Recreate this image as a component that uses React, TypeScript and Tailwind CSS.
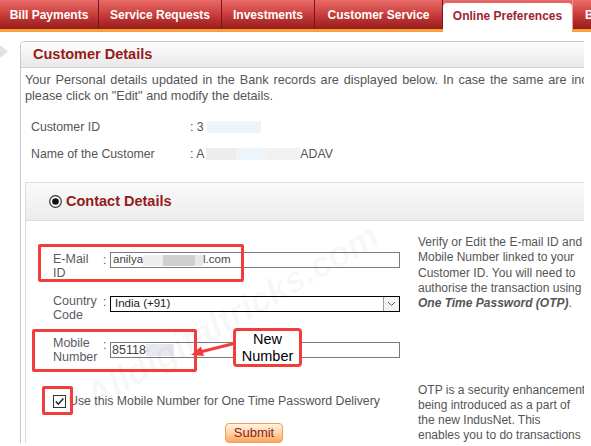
const tabs = [
  { label: "Bill Payments", w: "w-[99px]" },
  { label: "Service Requests", w: "w-[123px]" },
  { label: "Investments", w: "w-[93px]" },
  { label: "Customer Service", w: "w-[128px]" },
];

function TabBar() {
  return (
    <div className="flex h-[32px] border-b-[3px] border-[#f6a13a] bg-gradient-to-b from-[#ea6b69] via-[#c83d3b] to-[#971b1b]">
      {tabs.map((t) => (
        <div
          key={t.label}
          className={`${t.w} flex shrink-0 items-center justify-center border-r border-[#7e1414] text-[12px] font-bold text-white`}
        >
          {t.label}
        </div>
      ))}
      <div className="mt-[3px] flex h-[29px] w-[129px] shrink-0 items-start justify-center rounded-t-[4px] bg-white pt-[4px] text-[12px] font-bold text-[#9c2433]">
        Online Preferences
      </div>
      <div className="flex shrink-0 items-center border-l border-[#f29a9a] pl-[12px] text-[12px] font-bold text-white">
        Bill Pay
      </div>
    </div>
  );
}

function Radio() {
  return (
    <svg width="13" height="13" viewBox="0 0 13 13">
      <circle cx="6.5" cy="6.5" r="5.8" fill="#fff" stroke="#333" strokeWidth="1.2" />
      <circle cx="6.5" cy="6.5" r="3.3" fill="#111" />
    </svg>
  );
}

function CheckBox() {
  return (
    <svg width="13" height="13" viewBox="0 0 13 13">
      <rect x="0.5" y="0.5" width="12" height="12" fill="#fff" stroke="#333" />
      <path d="M2.8 6.6 L5.3 9.2 L10.4 3.4" fill="none" stroke="#222" strokeWidth="1.5" />
    </svg>
  );
}

function FormRow({
  label,
  colonTop,
  fieldTop,
  children,
}: {
  label: string;
  colonTop: string;
  fieldTop: string;
  children: React.ReactNode;
}) {
  return (
    <div className="flex items-start">
      <div className="w-[48px] text-[12.5px] leading-[14px] text-[#5a5a66]">{label}</div>
      <div className={`${colonTop} w-[9px] pl-[2px] text-[12px] leading-[14px]`}>:</div>
      <div className={fieldTop}>{children}</div>
    </div>
  );
}

export default function App() {
  return (
    <div className="relative h-[446px] w-[591px] overflow-hidden bg-white font-['Liberation_Sans',Arial,sans-serif] text-[#555]">
      <TabBar />
      <div className="mt-[9px] flex">
        <div className="w-[20px] shrink-0 pt-[4px]">
          <svg width="9" height="13" viewBox="0 0 9 13">
            <polygon points="0,0 8,6.5 0,13" fill="#e2e2e2" />
          </svg>
        </div>
        <div className="w-[564px] shrink-0 overflow-hidden rounded-tl-[5px] border-l border-t border-[#c9c9c9]">
          <div className="flex h-[26px] items-center border-b border-[#cfcfcf] bg-gradient-to-b from-[#fefefe] to-[#e8e8e8] pl-[12px] text-[14.5px] font-bold text-[#951b1b]">
            Customer Details
          </div>
          <div className="pl-[4px]">
            <div className="whitespace-nowrap pt-[4px] text-[12.7px] leading-[16px]">
              <div className="[word-spacing:1.3px]">
                Your Personal details updated in the Bank records are displayed below. In case the same are incorrect,
              </div>
              <div>please click on "Edit" and modify the details.</div>
            </div>

            <div className="mt-[15px] flex text-[12.3px] leading-[16px]">
              <div className="w-[165px] pl-[6px]">Customer ID</div>
              <div className="flex items-center">
                : 3<span className="ml-[3px] inline-block h-[12px] w-[54px] bg-[#eef5fa]" />
              </div>
            </div>
            <div className="mt-[11px] flex text-[12.3px] leading-[16px]">
              <div className="w-[165px] pl-[6px]">Name of the Customer</div>
              <div className="flex items-center whitespace-nowrap">
                : A
                <span className="ml-[2px] inline-block h-[12px] w-[30px] bg-[#ededed]" />
                <span className="inline-block h-[12px] w-[30px] bg-[#eef5fa]" />
                <span className="inline-block h-[12px] w-[34px] bg-[#f1f1f1]" />
                ADAV
              </div>
            </div>

            <div className="mt-[20px] w-[620px] border-l border-t border-[#dcdcdc]">
              <div className="flex h-[38px] items-center gap-[4px] border-b border-[#dcdcdc] bg-gradient-to-b from-[#fafafa] to-[#ececec] pl-[23px]">
                <Radio />
                <span className="text-[14.5px] font-bold text-[#951b1b]">Contact Details</span>
              </div>

              <div className="flex">
                <div className="w-[392px] shrink-0 pl-[27px] pt-[31px]">
                  <FormRow label="E-Mail ID" colonTop="mt-[1px]" fieldTop="mt-0">
                    <div className="flex h-[16px] w-[290px] items-center border border-[#7a7a7a] pl-[2px] text-[11.5px] text-[#444]">
                      anilya
                      <span className="inline-block h-[11px] w-[20px] bg-[#eeeeee]" />
                      <span className="inline-block h-[11px] w-[32px] bg-[#cfcfcf]" />
                      <span className="inline-block h-[11px] w-[8px] bg-[#e8e8e8]" />
                      l.com
                    </div>
                  </FormRow>
                  <div className="mt-[14px]">
                    <FormRow label="Country Code" colonTop="mt-[1px]" fieldTop="mt-[2px]">
                      <div className="flex h-[16px] w-[290px] items-center justify-between border border-black text-[11.5px] text-[#222]">
                        <span className="pl-[4px]">India (+91)</span>
                        <span className="flex h-[14px] w-[16px] items-center justify-center border-l border-[#9a9a9a] bg-[#f4f4f4]">
                          <svg width="9" height="6" viewBox="0 0 9 6">
                            <path d="M1 1 L4.5 4.5 L8 1" fill="none" stroke="#555" strokeWidth="1" />
                          </svg>
                        </span>
                      </div>
                    </FormRow>
                  </div>
                  <div className="mt-[14px]">
                    <FormRow label="Mobile Number" colonTop="mt-[2px]" fieldTop="mt-[6px]">
                      <div className="flex h-[16px] w-[290px] items-center border border-[#7a7a7a] pl-[1px] text-[12.5px] text-[#444]">
                        85118
                        <span className="inline-block h-[12px] w-[28px] bg-[#e8e8f0]" />
                      </div>
                    </FormRow>
                  </div>
                  <div className="mt-[29px] flex items-center gap-[3px] whitespace-nowrap text-[12.3px] leading-[16px]">
                    <CheckBox />
                    <span>Use this Mobile Number for One Time Password Delivery</span>
                  </div>
                  <div className="mt-[14px] pl-[172px]">
                    <div className="flex h-[20px] w-[58px] items-center justify-center rounded-[4px] border border-[#f0a050] bg-gradient-to-b from-[#fff3e6] via-[#ffd3a6] to-[#f9a85e] text-[13px] text-[#8b1c1c]">
                      Submit
                    </div>
                  </div>
                </div>

                <div className="whitespace-nowrap pt-[14px] text-[12px] leading-[15.3px]">
                  <div>Verify or Edit the E-mail ID and</div>
                  <div>Mobile Number linked to your</div>
                  <div>Customer ID. You will need to</div>
                  <div>authorise the transaction using</div>
                  <div>
                    <b>
                      <i>One Time Password (OTP)</i>
                    </b>
                    .
                  </div>
                  <div className="mt-[72px] leading-[14.8px]">
                    <div>OTP is a security enhancement</div>
                    <div>being introduced as a part of</div>
                    <div>the new IndusNet. This</div>
                    <div>enables you to do transactions</div>
                  </div>
                </div>
              </div>
            </div>
          </div>
        </div>
      </div>

      {/* watermark */}
      <div className="pointer-events-none absolute left-[88px] top-[372px] origin-left -rotate-[30deg] whitespace-nowrap text-[36px] font-bold italic text-black/[0.035]">
        Alldigitaltricks.com
      </div>

      {/* annotations */}
      <div className="absolute left-[38px] top-[244px] h-[38px] w-[206px] rounded-[2px] border-[3px] border-[#f23d3d]" />
      <div className="absolute left-[32px] top-[329px] h-[43px] w-[165px] rounded-[2px] border-[3px] border-[#f23d3d]" />
      <div className="absolute left-[42px] top-[386px] h-[29px] w-[31px] rounded-[2px] border-[3px] border-[#f23d3d]" />
      <svg className="absolute left-[188px] top-[336px]" width="50" height="24" viewBox="0 0 50 24">
        <line x1="48" y1="7" x2="12" y2="16" stroke="#f23d3d" strokeWidth="3" />
        <polygon points="3,19 13,10.5 16,20" fill="#f23d3d" />
      </svg>
      <div className="absolute left-[233px] top-[328px] flex h-[39px] w-[69px] flex-col items-center justify-center rounded-[4px] border-[3px] border-[#f23d3d] bg-white text-[14.5px] leading-[17px] text-black">
        <span>New</span>
        <span>Number</span>
      </div>
    </div>
  );
}
